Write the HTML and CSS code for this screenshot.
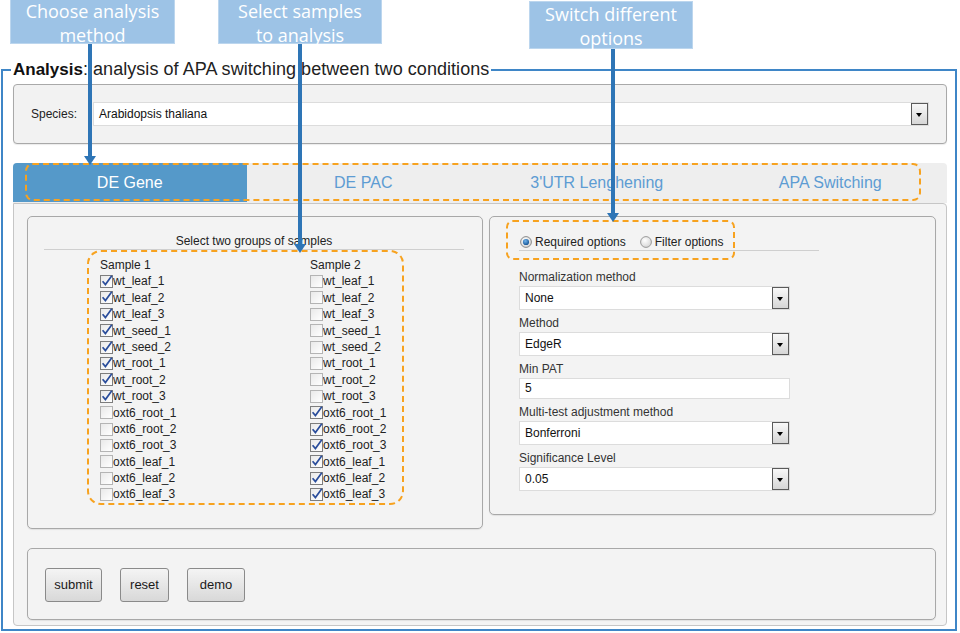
FILE: index.html
```html
<!DOCTYPE html>
<html>
<head>
<meta charset="utf-8">
<title>Analysis</title>
<link rel="stylesheet" href="styles.css">
</head>
<body>
<div class="page">
  <div class="callout c1">Choose analysis<br>method</div>
  <div class="callout c2">Select samples<br>to analysis</div>
  <div class="callout c3">Switch different<br>options</div>
  <div class="arrow a1"></div>
  <div class="arrow a2"></div>
  <div class="arrow a3"></div>

  <fieldset class="frame">
    <legend><b>Analysis</b><span class="legend-rest">: analysis of APA switching between two conditions</span></legend>

    <div class="species-panel">
      <span class="species-label">Species:</span>
      <div class="select select-wide"><span class="sel-text">Arabidopsis thaliana</span><span class="drop"></span></div>
    </div>

    <div class="tabs">
      <div class="tab active">DE Gene</div>
      <div class="tab">DE PAC</div>
      <div class="tab">3'UTR Lenghening</div>
      <div class="tab">APA Switching</div>
      <div class="hl hl-tabs"></div>
    </div>

    <div class="tab-content">
      <div class="wells">
        <div class="well well-samples">
          <div class="well-title">Select two groups of samples</div>
          <div class="sample-box">
            <div class="col col1">
              <div class="col-head">Sample 1</div>
              <div class="cb-row"><span class="cb on"><svg viewBox="0 0 13 13"><path d="M2.6 6.2 L5.4 9.6 L11.8 0.8" /></svg></span>wt_leaf_1</div>
              <div class="cb-row"><span class="cb on"><svg viewBox="0 0 13 13"><path d="M2.6 6.2 L5.4 9.6 L11.8 0.8" /></svg></span>wt_leaf_2</div>
              <div class="cb-row"><span class="cb on"><svg viewBox="0 0 13 13"><path d="M2.6 6.2 L5.4 9.6 L11.8 0.8" /></svg></span>wt_leaf_3</div>
              <div class="cb-row"><span class="cb on"><svg viewBox="0 0 13 13"><path d="M2.6 6.2 L5.4 9.6 L11.8 0.8" /></svg></span>wt_seed_1</div>
              <div class="cb-row"><span class="cb on"><svg viewBox="0 0 13 13"><path d="M2.6 6.2 L5.4 9.6 L11.8 0.8" /></svg></span>wt_seed_2</div>
              <div class="cb-row"><span class="cb on"><svg viewBox="0 0 13 13"><path d="M2.6 6.2 L5.4 9.6 L11.8 0.8" /></svg></span>wt_root_1</div>
              <div class="cb-row"><span class="cb on"><svg viewBox="0 0 13 13"><path d="M2.6 6.2 L5.4 9.6 L11.8 0.8" /></svg></span>wt_root_2</div>
              <div class="cb-row"><span class="cb on"><svg viewBox="0 0 13 13"><path d="M2.6 6.2 L5.4 9.6 L11.8 0.8" /></svg></span>wt_root_3</div>
              <div class="cb-row"><span class="cb"></span>oxt6_root_1</div>
              <div class="cb-row"><span class="cb"></span>oxt6_root_2</div>
              <div class="cb-row"><span class="cb"></span>oxt6_root_3</div>
              <div class="cb-row"><span class="cb"></span>oxt6_leaf_1</div>
              <div class="cb-row"><span class="cb"></span>oxt6_leaf_2</div>
              <div class="cb-row"><span class="cb"></span>oxt6_leaf_3</div>
            </div>
            <div class="col col2">
              <div class="col-head">Sample 2</div>
              <div class="cb-row"><span class="cb"></span>wt_leaf_1</div>
              <div class="cb-row"><span class="cb"></span>wt_leaf_2</div>
              <div class="cb-row"><span class="cb"></span>wt_leaf_3</div>
              <div class="cb-row"><span class="cb"></span>wt_seed_1</div>
              <div class="cb-row"><span class="cb"></span>wt_seed_2</div>
              <div class="cb-row"><span class="cb"></span>wt_root_1</div>
              <div class="cb-row"><span class="cb"></span>wt_root_2</div>
              <div class="cb-row"><span class="cb"></span>wt_root_3</div>
              <div class="cb-row"><span class="cb on"><svg viewBox="0 0 13 13"><path d="M2.6 6.2 L5.4 9.6 L11.8 0.8" /></svg></span>oxt6_root_1</div>
              <div class="cb-row"><span class="cb on"><svg viewBox="0 0 13 13"><path d="M2.6 6.2 L5.4 9.6 L11.8 0.8" /></svg></span>oxt6_root_2</div>
              <div class="cb-row"><span class="cb on"><svg viewBox="0 0 13 13"><path d="M2.6 6.2 L5.4 9.6 L11.8 0.8" /></svg></span>oxt6_root_3</div>
              <div class="cb-row"><span class="cb on"><svg viewBox="0 0 13 13"><path d="M2.6 6.2 L5.4 9.6 L11.8 0.8" /></svg></span>oxt6_leaf_1</div>
              <div class="cb-row"><span class="cb on"><svg viewBox="0 0 13 13"><path d="M2.6 6.2 L5.4 9.6 L11.8 0.8" /></svg></span>oxt6_leaf_2</div>
              <div class="cb-row"><span class="cb on"><svg viewBox="0 0 13 13"><path d="M2.6 6.2 L5.4 9.6 L11.8 0.8" /></svg></span>oxt6_leaf_3</div>
            </div>
          </div>
        </div>

        <div class="well well-options">
          <div class="radio-row">
            <span class="radio-item"><svg class="radio" viewBox="0 0 12 12"><defs><radialGradient id="rg" cx="0.4" cy="0.35" r="0.7"><stop offset="0" stop-color="#ffffff"/><stop offset="1" stop-color="#d4d4d4"/></radialGradient><radialGradient id="rb" cx="0.4" cy="0.35" r="0.7"><stop offset="0" stop-color="#6fb3ec"/><stop offset="1" stop-color="#114f8f"/></radialGradient></defs><circle cx="6" cy="6" r="5.4" fill="url(#rg)" stroke="#8a8a8a" stroke-width="1"/><circle cx="6" cy="6" r="3.1" fill="url(#rb)"/></svg>Required options</span>
            <span class="radio-item"><svg class="radio" viewBox="0 0 12 12"><circle cx="6" cy="6" r="5.4" fill="url(#rg)" stroke="#9a9a9a" stroke-width="1"/></svg>Filter options</span>
          </div>
          <div class="fields">
            <div class="field">
              <div class="field-label">Normalization method</div>
              <div class="select"><span class="sel-text">None</span><span class="drop"></span></div>
            </div>
            <div class="field">
              <div class="field-label">Method</div>
              <div class="select"><span class="sel-text">EdgeR</span><span class="drop"></span></div>
            </div>
            <div class="field">
              <div class="field-label">Min PAT</div>
              <div class="text-input">5</div>
            </div>
            <div class="field">
              <div class="field-label">Multi-test adjustment method</div>
              <div class="select"><span class="sel-text">Bonferroni</span><span class="drop"></span></div>
            </div>
            <div class="field">
              <div class="field-label">Significance Level</div>
              <div class="select"><span class="sel-text">0.05</span><span class="drop"></span></div>
            </div>
          </div>
          <div class="hl hl-radio"></div>
        </div>
      </div>

      <div class="well well-buttons">
        <button class="btn btn-submit">submit</button>
        <button class="btn btn-reset">reset</button>
        <button class="btn btn-demo">demo</button>
      </div>
    </div>
  </fieldset>
</div>
</body>
</html>
```

FILE: styles.css
```css
* { box-sizing: border-box; }
html, body { margin: 0; padding: 0; background: #ffffff; }
body {
  font-family: "Liberation Sans", Arial, sans-serif;
  font-size: 12px;
  color: #222;
}
.page {
  position: relative;
  width: 960px;
  height: 633px;
  overflow: hidden;
  padding-top: 59px;
}

/* annotations */
.callout {
  position: absolute;
  z-index: 5;
  background: #9dc3e6;
  border: 1px solid #bcd6ee;
  color: #ffffff;
  font-family: "Open Sans", "Liberation Sans", sans-serif;
  font-size: 18px;
  line-height: 24px;
  text-align: center;
}
.c1 { left: 10px; top: -2px; width: 165px; height: 46px; }
.c2 { left: 218px; top: -2px; width: 164px; height: 46px; }
.c3 { left: 529px; top: 1px; width: 164px; height: 48px; }

.arrow {
  position: absolute;
  z-index: 6;
  width: 4px;
  background: #2e75b6;
}
.arrow::after {
  content: "";
  position: absolute;
  left: -4px;
  bottom: -8px;
  border-left: 6px solid transparent;
  border-right: 6px solid transparent;
  border-top: 9px solid #2e75b6;
}
.a1 { left: 88px; top: 44px; height: 113px; }
.a2 { left: 298px; top: 44px; height: 201px; }
.a3 { left: 611px; top: 49px; height: 165px; }

.hl {
  position: absolute;
  z-index: 4;
  border: 2px dashed #f7a21f;
  pointer-events: none;
}

/* frame */
.frame {
  margin: 0 3px 0 1px;
  border: 2px solid #3f86c7;
  padding: 4px 8px 4px 10px;
  min-width: 0;
  height: 572px;
}
.frame legend {
  font-size: 17px;
  line-height: 20px;
  padding: 0 2px;
  margin-left: -2px;
  color: #222;
}
.frame legend b { color: #111; }
.legend-rest { font-size: 18px; letter-spacing: 0.05px; }

/* species */
.species-panel {
  height: 60px;
  display: flex;
  align-items: center;
  padding: 0 17px 0 17px;
  background: #f2f2f2;
  border: 1px solid #a9a9a9;
  border-radius: 4px;
  box-shadow: 0 1px 1px rgba(0,0,0,0.08);
}
.species-label {
  width: 62px;
  font-size: 12px;
  color: #222;
}
.select {
  display: flex;
  align-items: center;
  height: 24px;
  background: #ffffff;
  border: 1px solid #dcdcdc;
  padding-left: 5px;
}
.select-wide { flex: 1; }
.sel-text {
  flex: 1;
  font-size: 12px;
  color: #111;
}
.drop {
  position: relative;
  width: 17px;
  height: 22px;
  border: 1px solid #5a5a5a;
  background: linear-gradient(#f8f8f8, #d6d6d6);
}
.drop::after {
  content: "";
  position: absolute;
  left: 4px;
  top: 9px;
  border-left: 3.5px solid transparent;
  border-right: 3.5px solid transparent;
  border-top: 4px solid #000;
}

/* tabs */
.tabs {
  position: relative;
  margin-top: 19px;
  height: 40px;
  display: grid;
  grid-template-columns: repeat(4, 1fr);
  background: #eeeeee;
  border-radius: 4px 4px 0 0;
}
.tab {
  display: flex;
  align-items: center;
  justify-content: center;
  font-size: 16px;
  color: #5d9cd3;
}
.tab.active {
  background: #5599c9;
  color: #ffffff;
  border-radius: 4px 0 0 0;
  height: 39px;
}
.hl-tabs {
  left: 12px;
  top: 0;
  width: 896px;
  height: 38px;
  border-radius: 8px;
}

/* tab content */
.tab-content {
  height: 423px;
  background: #f4f4f4;
  border: 1px solid #c6c6c6;
  border-radius: 0 4px 4px 4px;
  padding: 12px 10px 5px 13px;
}
.wells {
  display: flex;
  align-items: flex-start;
  gap: 6px;
}
.well {
  position: relative;
  background: #f3f3f3;
  border: 1px solid #a8a8a8;
  border-radius: 5px;
  box-shadow: 0 1px 1px rgba(0,0,0,0.08);
}
.well-samples {
  width: 456px;
  padding: 17px 18px 23px 16px;
}
.well-title {
  text-align: center;
  font-size: 12px;
  line-height: 14px;
  padding-bottom: 1px;
  border-bottom: 1px solid #cfcfcf;
  color: #222;
}
.sample-box {
  display: flex;
  margin-left: 43px;
  width: 317px;
  padding: 5px 0 0 11px;
  border: 2px dashed #f7a21f;
  border-radius: 14px;
}
.col1 { width: 210px; }
.col-head,
.cb-row {
  height: 16.4px;
  line-height: 16.4px;
  font-size: 12px;
  color: #222;
  white-space: nowrap;
}
.cb-row {
  display: flex;
  align-items: center;
}
.cb {
  display: inline-block;
  width: 13px;
  height: 13px;
  border: 1px solid #b4b4b4;
  background: linear-gradient(135deg, #e9e9e9, #ffffff);
  position: relative;
}
.cb.on { border-color: #7d7d7d; }
.cb svg {
  position: absolute;
  left: -1px;
  top: -1px;
  width: 13px;
  height: 13px;
  overflow: visible;
}
.cb svg path {
  fill: none;
  stroke: #2a4d9b;
  stroke-width: 1.7;
}

.well-options {
  flex: 1;
  height: 299px;
  padding: 17px 10px 17px 29px;
}
.radio-row {
  width: 300px;
  height: 17px;
  display: flex;
  align-items: center;
  border-bottom: 1px solid #cfcfcf;
  padding-bottom: 1px;
  font-size: 12px;
  color: #222;
}
.radio-item {
  display: flex;
  align-items: center;
  margin-right: 13px;
}
.radio {
  width: 12px;
  height: 12px;
  margin: 0 3px 0 1px;
}
.fields {
  margin-top: 19px;
  width: 271px;
  display: flex;
  flex-direction: column;
  gap: 6px;
}
.field-label {
  font-size: 12px;
  line-height: 14px;
  margin-bottom: 2px;
  color: #333;
}
.text-input {
  height: 21px;
  line-height: 19px;
  background: #ffffff;
  border: 1px solid #dcdcdc;
  padding-left: 5px;
  font-size: 12px;
  color: #111;
}
.hl-radio {
  left: 16px;
  top: 3px;
  width: 229px;
  height: 40px;
  border-radius: 7px;
}

.well-buttons {
  margin-top: 19px;
  height: 72px;
  padding: 19px 0 0 17px;
  display: flex;
  align-items: flex-start;
  gap: 18px;
}
.btn {
  height: 34px;
  border: 1px solid #8a8a8a;
  border-radius: 3px;
  background: linear-gradient(#f4f4f4, #d8d8d8);
  font-family: "Liberation Sans", Arial, sans-serif;
  font-size: 13px;
  color: #1a1a1a;
  padding: 0;
}
.btn-submit { width: 57px; }
.btn-reset { width: 49px; }
.btn-demo { width: 58px; }
```
